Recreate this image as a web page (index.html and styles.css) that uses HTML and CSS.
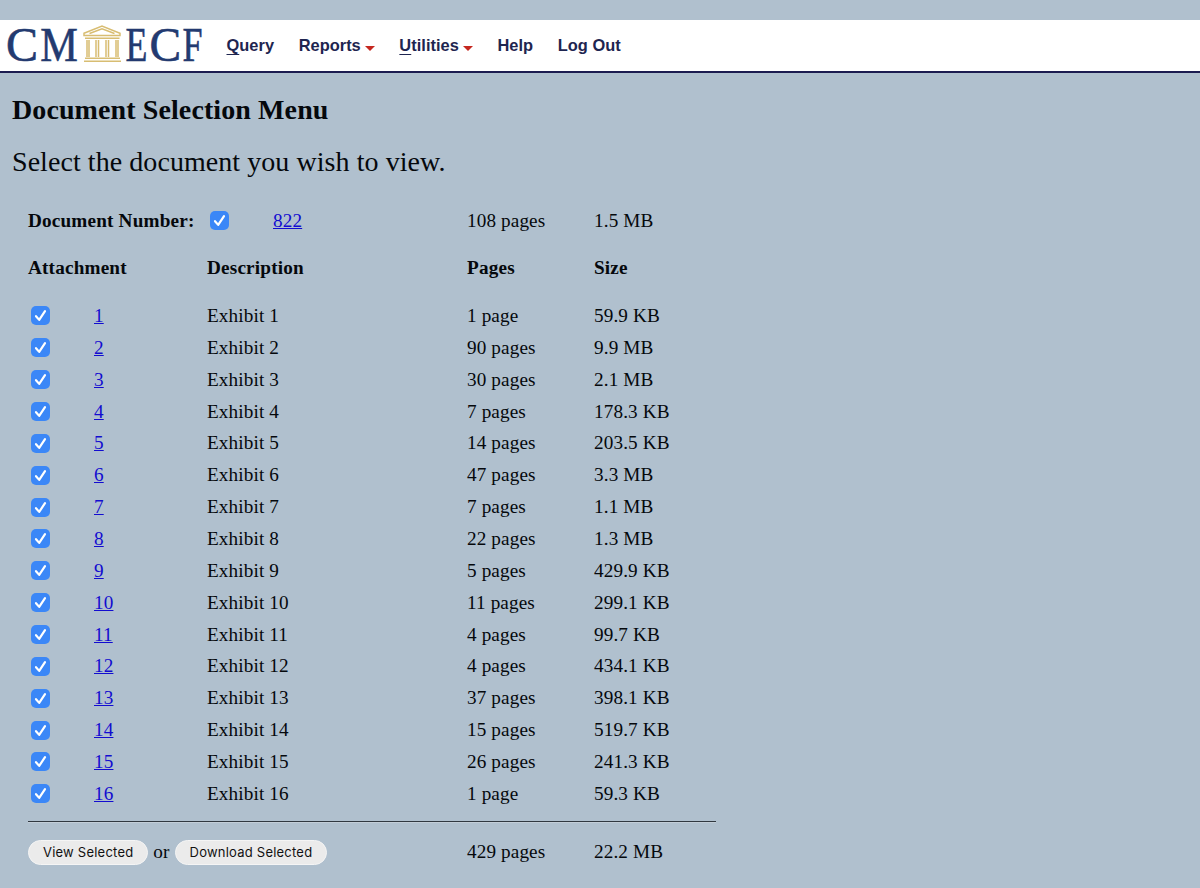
FILE: index.html
```html
<!DOCTYPE html>
<html lang="en">

<head>
    <meta charset="UTF-8">
    <meta name="viewport" content="width=device-width, initial-scale=1.0">
    <title>CM/ECF - Document Selection Menu</title>
    <link rel="stylesheet" href="styles.css">
</head>

<body>
    <div class="header">
        <svg class="logo" width="204" height="50" viewBox="0 0 204 50">
            <g class="logo-text">
                <text x="5.9" y="41.3" textLength="32" lengthAdjust="spacingAndGlyphs">C</text>
                <text x="40.3" y="41.3" textLength="37.6" lengthAdjust="spacingAndGlyphs">M</text>
                <text x="125.6" y="41.3" textLength="21.9" lengthAdjust="spacingAndGlyphs">E</text>
                <text x="149.6" y="41.3" textLength="31.6" lengthAdjust="spacingAndGlyphs">C</text>
                <text x="182.6" y="41.3" textLength="20" lengthAdjust="spacingAndGlyphs">F</text>
            </g>
            <g class="logo-building">
                <path d="M84 13.2 L102 6 L120 13.2 V15.5 H84 Z M89.5 13.5 L102 8.8 L114.5 13.5" />
                <path d="M85 18.2 H119.5 M87 20 V37 M89 20 V37 M96 20 V37 M98.5 20 V37 M106 20 V37 M108.5 20 V37 M116 20 V37 M118 20 V37" />
                <path d="M85 38.3 H120 M84 41.2 H121" />
            </g>
        </svg>
        <ul class="nav">
            <li><a href="#"><u>Q</u>uery</a></li>
            <li><a href="#">Reports<i class="arrow"></i></a></li>
            <li><a href="#"><u>U</u>tilities<i class="arrow"></i></a></li>
            <li><a href="#">Help</a></li>
            <li><a href="#">Log Out</a></li>
        </ul>
    </div>

    <div class="main">
        <h2>Document Selection Menu</h2>
        <p class="tip">Select the document you wish to view.</p>

        <form class="docs">
            <div class="row row-doc">
                <div class="doc-number">
                    <b>Document Number:</b>
                    <label class="check"><input type="checkbox" checked><svg viewBox="0 0 19 19"><path d="M5 10.2 L8.2 13.9 L14 5.2" /></svg></label>
                    <a href="#">822</a>
                </div>
                <span>108 pages</span>
                <span>1.5 MB</span>
            </div>
            <div class="row row-head">
                <b class="attachment">Attachment</b>
                <b>Description</b>
                <b>Pages</b>
                <b>Size</b>
            </div>
            <div id="list"></div>
            <hr>
            <div class="row row-total">
                <div class="actions">
                    <button type="button">View Selected</button>
                    <span>or</span>
                    <button type="button">Download Selected</button>
                </div>
                <span>429 pages</span>
                <span>22.2 MB</span>
            </div>
        </form>
    </div>

    <script>
        (function() {
            // pages, size
            var data = [
                [1, '59.9 KB'],
                [90, '9.9 MB'],
                [30, '2.1 MB'],
                [7, '178.3 KB'],
                [14, '203.5 KB'],
                [47, '3.3 MB'],
                [7, '1.1 MB'],
                [22, '1.3 MB'],
                [5, '429.9 KB'],
                [11, '299.1 KB'],
                [4, '99.7 KB'],
                [4, '434.1 KB'],
                [37, '398.1 KB'],
                [15, '519.7 KB'],
                [26, '241.3 KB'],
                [1, '59.3 KB']
            ];
            var check = document.querySelector('.check').outerHTML;
            var html = '';
            for (var i = 0; i < data.length; i++) {
                var n = i + 1;
                html += '<div class="row">' + check +
                    '<span><a href="#">' + n + '</a></span>' +
                    '<span>Exhibit ' + n + '</span>' +
                    '<span>' + data[i][0] + (data[i][0] === 1 ? ' page' : ' pages') + '</span>' +
                    '<span>' + data[i][1] + '</span></div>';
            }
            document.getElementById('list').innerHTML = html;
        })();
    </script>
</body>

</html>
```
FILE: styles.css
```css
* {
    margin: 0;
    padding: 0;
    box-sizing: border-box;
}

body {
    padding-top: 20px;
    background-color: #b0c0ce;
    color: #05080c;
    font-family: "Liberation Serif", "Times New Roman", serif;
    font-size: 19.2px;
    letter-spacing: 0.12px;
}
/* header */

.header {
    display: flex;
    height: 53px;
    background-color: #fff;
    border-bottom: 2px solid #1c1c50;
}

.logo {
    overflow: visible;
}

.logo-text {
    font-size: 48px;
    letter-spacing: 0;
    fill: #233a70;
    stroke: #233a70;
    stroke-width: 0.6;
}

.logo-building {
    fill: none;
    stroke: #d8bd72;
    stroke-width: 1.5;
}

.nav {
    display: flex;
    gap: 24.6px;
    margin-left: 22.5px;
    list-style: none;
    font: bold 16.4px/50px "Liberation Sans", Arial, sans-serif;
    letter-spacing: 0.03px;
}

.nav a {
    color: #1e2550;
    text-decoration: none;
}

.nav u {
    text-underline-offset: 3px;
    text-decoration-thickness: 1px;
}

.arrow {
    display: inline-block;
    margin-left: 4px;
    border: 5px solid transparent;
    border-top-color: #c5271f;
    border-bottom: 0;
}
/* content */

.main {
    padding: 20px 12px 0;
}

h2 {
    font-size: 28px;
    line-height: 34px;
    letter-spacing: 0.1px;
}

.tip {
    margin-top: 18px;
    font-size: 28px;
    line-height: 34px;
    letter-spacing: 0.06px;
}

.docs {
    width: 688px;
    margin: 18px 0 0 16px;
}

.row {
    display: grid;
    grid-template-columns: 66px 113px 260px 127px 122px;
    align-items: center;
    height: 31.87px;
}

.row-doc,
.row-head {
    height: 47.5px;
}

.doc-number,
.actions {
    grid-column: span 3;
    display: flex;
    align-items: center;
}

.doc-number b {
    width: 179px;
    letter-spacing: 0.18px;
}

.doc-number a {
    margin-left: 44px;
}

.row-head b {
    letter-spacing: 0.18px;
}

.attachment {
    grid-column: span 2;
}

.docs a {
    color: #120cd0;
    text-decoration-thickness: 1.3px;
}

.check {
    position: relative;
    width: 19px;
    height: 19px;
    margin-left: 3px;
}

.check input {
    display: block;
    width: 19px;
    height: 19px;
    appearance: none;
    border-radius: 5px;
    background-color: #3b87f7;
}

.check svg {
    position: absolute;
    top: 0;
    left: 0;
    fill: none;
    stroke: #fff;
    stroke-width: 2.2;
    stroke-linecap: round;
    stroke-linejoin: round;
}

#list {
    margin-top: 8px;
}

hr {
    margin-top: 11.5px;
    border: 0;
    border-top: 1px solid #303840;
    border-bottom: 1px solid #c3ced8;
}

.row-total {
    height: 57.5px;
}

.actions span {
    margin: 0 5px;
}

button {
    height: 25px;
    padding: 0 14px;
    border: 1px solid #f5f5f5;
    border-radius: 13px;
    background-color: #ebebeb;
    color: #111;
    font: 13px Inter, sans-serif;
    letter-spacing: 0.22px;
}
```
